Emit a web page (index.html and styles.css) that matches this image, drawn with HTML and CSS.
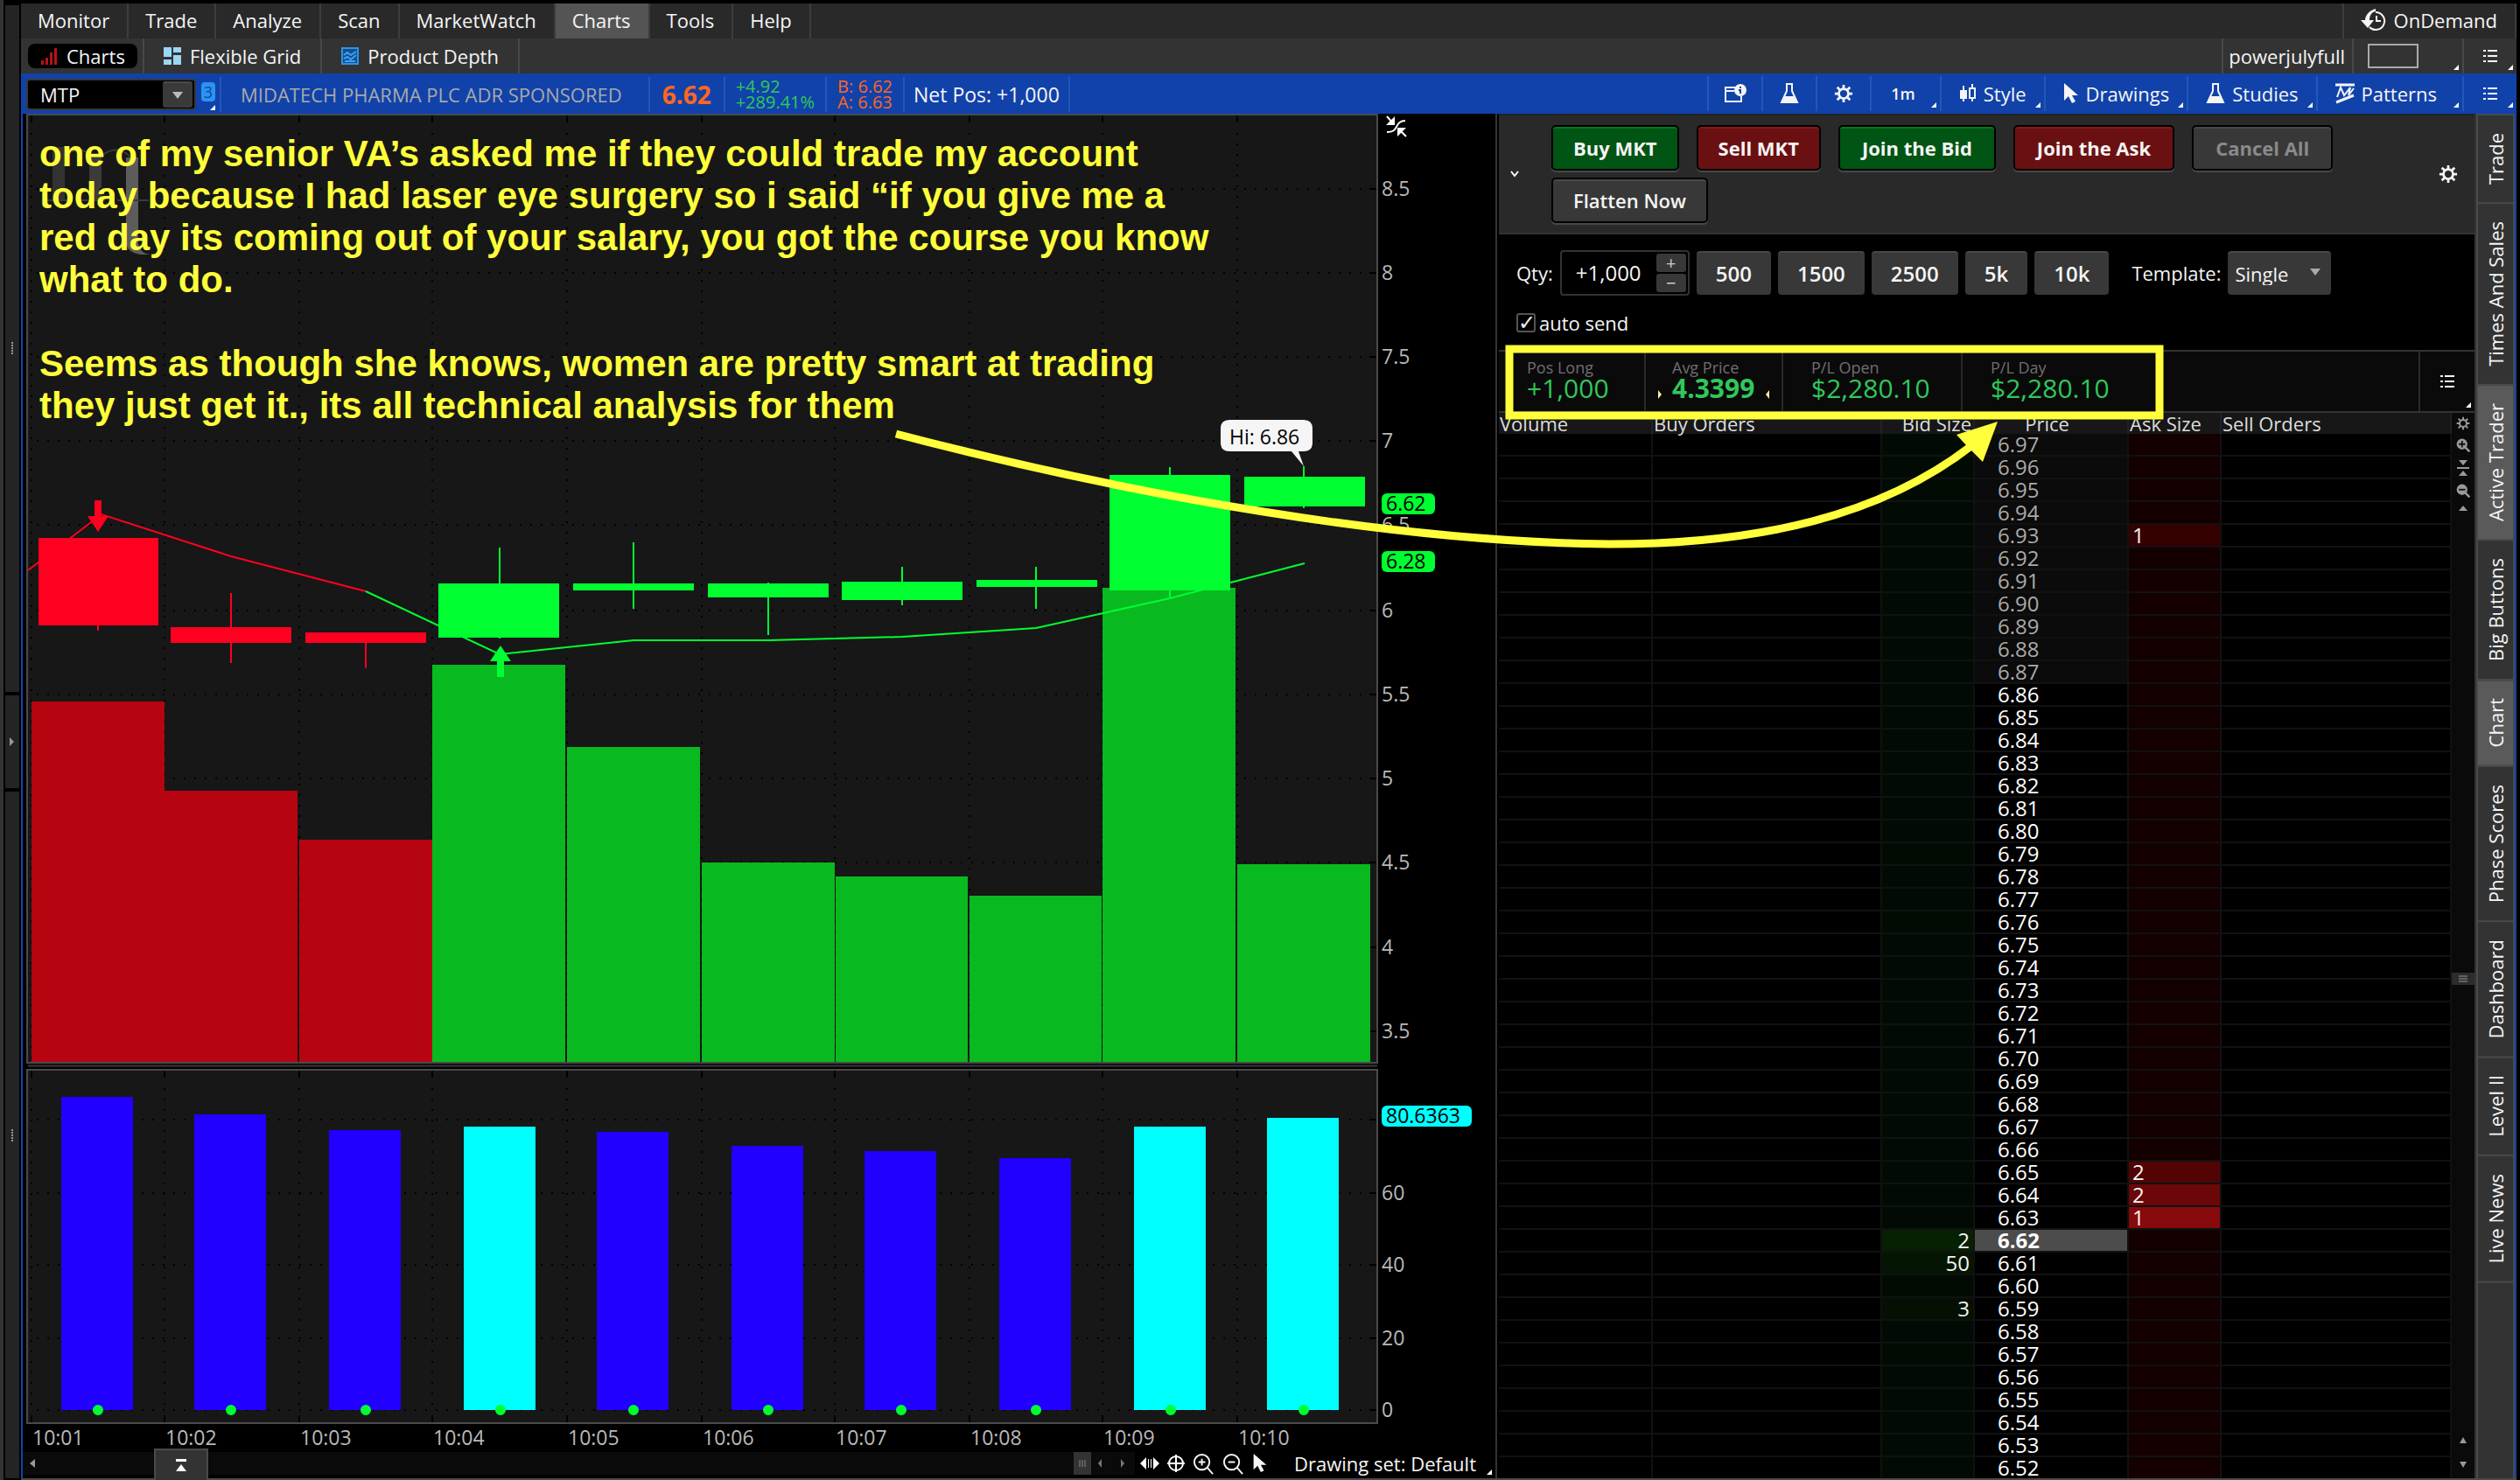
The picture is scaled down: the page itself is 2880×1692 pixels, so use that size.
FILE: index.html
```html
<!DOCTYPE html>
<html lang="en">
<head>
<meta charset="utf-8">
<title>Charts - MTP</title>
<link rel="stylesheet" href="styles.css">
</head>
<body>
<svg class="defs" aria-hidden="true">
  <symbol id="list" viewBox="0 0 16 16"><path d="M0 2h3M5 2h11M0 8h3M5 8h11M0 14h3M5 14h11" stroke="currentColor" stroke-width="2"/></symbol>
  <symbol id="gear" viewBox="0 0 24 24"><circle cx="12" cy="12" r="6" fill="none" stroke="currentColor" stroke-width="3"/><path d="M12 1v5M12 18v5M1 12h5M18 12h5M4 4l4 4M16 16l4 4M20 4l-4 4M8 16l-4 4" stroke="currentColor" stroke-width="3"/></symbol>
  <symbol id="flask" viewBox="0 0 22 26"><path d="M7 2h8M8 2v8L2 23h18L14 10V2" fill="none" stroke="currentColor" stroke-width="2"/><path d="M6 16h10l4 8H2z" fill="currentColor"/></symbol>
  <symbol id="cursor" viewBox="0 0 18 24"><path d="M1 0v20l5-5 4 8 4-2-4-7h7z" fill="currentColor"/></symbol>
  <symbol id="zin" viewBox="0 0 26 26"><circle cx="11" cy="11" r="9" fill="none" stroke="currentColor" stroke-width="2"/><path d="M17 17l7 8M7 11h8M11 7v8" stroke="currentColor" stroke-width="2"/></symbol>
  <symbol id="zout" viewBox="0 0 26 26"><circle cx="11" cy="11" r="9" fill="none" stroke="currentColor" stroke-width="2"/><path d="M17 17l7 8M7 11h8" stroke="currentColor" stroke-width="2"/></symbol>
</svg>

<aside class="gutter">
  <div class="gut g1"><span class="grip"></span></div>
  <div class="gut g2"><svg width="6" height="10"><path d="M0 0l5 5-5 5z" fill="#999"/></svg></div>
  <div class="gut g3"><span class="grip"></span></div>
</aside>

<div class="app">
  <div class="titlebar"></div>
  <nav class="menubar">
    <button>Monitor</button><button>Trade</button><button>Analyze</button><button>Scan</button><button>MarketWatch</button><button class="on">Charts</button><button>Tools</button><button>Help</button>
    <button class="ondemand"><svg width="30" height="26" viewBox="0 0 30 26"><path d="M17 4A10 10 0 1 1 10 21" fill="none" stroke="currentColor" stroke-width="2"/><path d="M18 8v6h5" fill="none" stroke="currentColor" stroke-width="2"/><path d="M17 0C9 2 5 8 5 13H0l8 9 7-9h-5c0-5 2-9 7-10z" fill="currentColor"/></svg>OnDemand</button>
  </nav>
  <nav class="subbar">
    <button class="pill-wrap"><span class="pill"><svg width="20" height="20"><path d="M1 20v-5h3v5zM6 20v-8h3v8zM11 20V6h3v14zM16 20V1h3v19z" fill="#b5121b"/></svg>Charts</span></button>
    <button class="grid-tab"><svg width="20" height="20"><path d="M0 0h9v11H0zM0 14h9v6H0zM11 0h9v6h-9zM11 9h9v11h-9z" fill="#9bd6f7"/></svg>Flexible Grid</button>
    <button class="depth-tab"><svg width="20" height="20"><rect x="1" y="1" width="18" height="18" fill="#174f86" stroke="#2a94f0" stroke-width="2"/><path d="M3 9l4-3 4 3 6-4M3 13l4-2 4 3 6-5M4 16h12" fill="none" stroke="#39a0ff" stroke-width="2"/></svg>Product Depth</button>
    <span class="spacer"></span>
    <button class="layout-name">powerjulyfull</button>
    <button class="layout-box tri" aria-label="Layout"><span></span></button>
    <button class="list-btn tri" aria-label="Menu"><svg width="16" height="16"><use href="#list"/></svg></button>
  </nav>
  <header class="quote">
    <div class="sym"><label><input type="text" value="MTP" aria-label="Symbol"></label><button aria-label="Open symbol list"><svg width="12" height="8"><path d="M0 0h12L6 8z" fill="#bbb"/></svg></button></div>
    <a class="link tri" href="#">3</a>
    <span class="name">MIDATECH PHARMA PLC ADR SPONSORED</span>
    <strong class="last">6.62</strong>
    <span class="pair up">+4.92<br>+289.41%</span>
    <span class="pair ba">B: 6.62<br>A: 6.63</span>
    <span class="net">Net Pos: +1,000</span>
    <span class="spacer"></span>
    <div class="tools">
      <button class="ico" aria-label="Info"><svg width="26" height="22" viewBox="0 0 26 22"><path d="M14 4H2v16h18v-6M2 8h10" fill="none" stroke="currentColor" stroke-width="2"/><circle cx="19" cy="7" r="7" fill="currentColor"/><path d="M19 3v2M17 7h2v4" stroke="#1142aa" stroke-width="2" fill="none"/></svg></button>
      <button class="ico" aria-label="Lab"><svg width="22" height="26"><use href="#flask"/></svg></button>
      <button class="ico" aria-label="Settings"><svg width="22" height="22"><use href="#gear"/></svg></button>
      <button class="tri tf">1m</button>
      <button class="tri"><svg width="20" height="24"><path d="M5 3v18M15 1v6M15 17v4" stroke="currentColor" stroke-width="2"/><path d="M1 8h8v10H1z" fill="currentColor"/><path d="M12 6h6v11h-6z" fill="none" stroke="currentColor" stroke-width="2"/></svg>Style</button>
      <button class="tri"><svg width="18" height="24"><use href="#cursor"/></svg>Drawings</button>
      <button class="tri"><svg width="22" height="26"><use href="#flask"/></svg>Studies</button>
      <button class="tri pat"><svg width="22" height="24"><path d="M0 2h22M1 22l20-8" stroke="currentColor" stroke-width="3"/><path d="M2 16L6 5l4 9 7-9-2 9 6-8" fill="none" stroke="currentColor" stroke-width="2"/></svg>Patterns</button>
      <button class="tri ico" aria-label="Menu"><svg width="16" height="16"><use href="#list"/></svg></button>
    </div>
  </header>

  <main class="work">
    <section class="chart">
      <svg class="plot" viewBox="26 130 1683 1526" preserveAspectRatio="xMinYMin meet">
        <rect x="31" y="131" width="1543" height="1084" fill="#171717" stroke="#4a4a4a" stroke-width="2"/>
        <rect x="32" y="1217" width="1542" height="3" fill="#292929"/>
        <rect x="31" y="1223" width="1543" height="404" fill="#171717" stroke="#4a4a4a" stroke-width="2"/>
        <g class="watermark"><path opacity=".6" d="M60 168h14v60H60z"/><path opacity=".8" d="M102 175h14v55h-14z"/><path fill="#5c5c5c" d="M144 180h14v98q2 12 14 13h-12q-16-3-16-15z"/><path d="M74 178q18-14 32 2M116 178q18-14 34 2M50 229h28M92 229h28M134 229h36" fill="none" stroke="#3a3a3a" stroke-width="2"/></g>
        <g class="grid">
          <path d="M36 152V1214M188 152V1214M342 152V1214M494 152V1214M648 152V1214M802 152V1214M954 152V1214M1108 152V1214M1260 152V1214M1414 152V1214"/>
          <path d="M42 216H1560M42 312H1560M42 408H1560M42 504H1560M42 600H1560M42 698H1560M42 794H1560M42 890H1560M42 986H1560M42 1083H1560M42 1179H1560"/>
          <path d="M36 1244V1612M188 1244V1612M342 1244V1612M494 1244V1612M648 1244V1612M802 1244V1612M954 1244V1612M1108 1244V1612M1260 1244V1612M1414 1244V1612"/>
          <path d="M42 1280H1560M42 1364H1560M42 1446H1560M42 1530H1560M42 1612H1560"/>
        </g>
        <path class="ticks" d="M36 132v8M188 132v8M342 132v8M494 132v8M648 132v8M802 132v8M954 132v8M1108 132v8M1260 132v8M1414 132v8M36 1224v8M188 1224v8M342 1224v8M494 1224v8M648 1224v8M802 1224v8M954 1224v8M1108 1224v8M1260 1224v8M1414 1224v8M36 1618v8M188 1618v8M342 1618v8M494 1618v8M648 1618v8M802 1618v8M954 1618v8M1108 1618v8M1260 1618v8M1414 1618v8M1565 216h8M1565 312h8M1565 408h8M1565 504h8M1565 600h8M1565 698h8M1565 794h8M1565 890h8M1565 986h8M1565 1083h8M1565 1179h8M1565 1280h8M1565 1364h8M1565 1446h8M1565 1530h8M1565 1612h8"/>
        <path fill="#b70411" d="M36 802h152v412H36zM188 904h152v310H188zM342 960h152v254H342z"/>
        <path fill="#08b920" d="M494 760h152v454H494zM648 854h152v360H648zM802 986h152v228H802zM955 1002h151v212H955zM1108 1024h151v190h-151zM1260 672h152v542h-152zM1414 988h152v226h-152z"/>
        <g fill="none" stroke-width="2">
          <path stroke="#ff0020" d="M32 652L116 588L264 636L418 676M264 678v80M418 735v29M112 715v6"/>
          <path stroke="#00ff30" d="M418 676L571 748L724 732H878L1031 728L1184 718L1337 684L1491 644M571 626v104M724 620v76M878 666v60M1031 648v44M1184 648v48M1337 534v149M1490 533v48"/>
        </g>
        <path fill="#ff0020" d="M44 615h137v100H44zM195 717h138v18H195zM349 723h138v12H349zM108 572h8v18h8l-12 18-12-18h8z"/>
        <path fill="#00ff30" d="M501 667h138v62H501zM655 667h138v8H655zM809 667h138v16H809zM962 665h138v21H962zM1116 663h138v8h-138zM1268 543h138v132h-138zM1422 545h138v34h-138zM568 774h8v-18h8l-12-18-12 18h8z"/>
        <path fill="#f5f5f5" d="M1405 480h85q10 0 10 10v16q0 10-10 10h-6l6 17-14-17h-71q-10 0-10-10v-16q0-10 10-10z"/>
        <text x="1405" y="508" fill="#000">Hi: 6.86</text>
        <path fill="#2100ff" d="M70 1254h82v358H70zM222 1274h82v338h-82zM376 1292h82v320h-82zM682 1294h82v318h-82zM836 1310h82v302h-82zM988 1316h82v296h-82zM1142 1324h82v288h-82z"/>
        <path fill="#0ff" d="M530 1288h82v324h-82zM1296 1288h82v324h-82zM1448 1278h82v334h-82z"/>
        <path class="dots" d="M112 1612h0M264 1612h0M418 1612h0M572 1612h0M724 1612h0M878 1612h0M1030 1612h0M1184 1612h0M1338 1612h0M1490 1612h0"/>
        <g class="axis">
          <text x="1579" y="224">8.5</text><text x="1579" y="320">8</text><text x="1579" y="416">7.5</text><text x="1579" y="512">7</text><text x="1579" y="608">6.5</text><text x="1579" y="706">6</text><text x="1579" y="802">5.5</text><text x="1579" y="898">5</text><text x="1579" y="994">4.5</text><text x="1579" y="1091">4</text><text x="1579" y="1187">3.5</text>
          <text x="1579" y="1372">60</text><text x="1579" y="1454">40</text><text x="1579" y="1538">20</text><text x="1579" y="1620">0</text>
          <text x="37" y="1652">10:01</text><text x="189" y="1652">10:02</text><text x="343" y="1652">10:03</text><text x="495" y="1652">10:04</text><text x="649" y="1652">10:05</text><text x="803" y="1652">10:06</text><text x="955" y="1652">10:07</text><text x="1109" y="1652">10:08</text><text x="1261" y="1652">10:09</text><text x="1415" y="1652">10:10</text>
        </g>
        <g class="flags">
          <rect x="1579" y="564" width="61" height="24" rx="6" fill="#00ff30"/><text x="1584" y="584">6.62</text>
          <rect x="1579" y="630" width="61" height="24" rx="6" fill="#00ff30"/><text x="1584" y="650">6.28</text>
          <rect x="1579" y="1264" width="103" height="24" rx="6" fill="#0ff"/><text x="1584" y="1284">80.6363</text>
        </g>
        <path d="M1594 133v10h-10zM1597 146h10l-10 10z" fill="#fff"/><path d="M1585 133l7 8M1600 149l7 7M1606 138c-6 0-8 3-10 7s-4 6-11 6" fill="none" stroke="#fff" stroke-width="2"/>
      </svg>
      <p class="note">one of my senior VA’s asked me if they could trade my account<br>today because I had laser eye surgery so i said “if you give me a<br>red day its coming out of your salary, you got the course you know<br>what to do.<br><br>Seems as though she knows, women are pretty smart at trading<br>they just get it., its all technical analysis for them</p>
      <footer class="foot tri">
        <div class="track"><svg width="6" height="10"><path d="M6 0L0 5l6 5z" fill="#999"/></svg><button class="expand" aria-label="Expand"><svg width="14" height="14"><path d="M1 0h12v3H1zM7 6l6 8H1z" fill="#fff"/></svg></button><span class="spacer"></span><span class="thumb"><svg width="8" height="8"><path d="M1 0v8M4 0v8M7 0v8" stroke="#888"/></svg></span><svg width="30" height="10"><path d="M4 0L0 5l4 5zM26 0l4 5-4 5z" fill="#777"/></svg></div>
        <div class="foot-tools">
          <svg width="22" height="14"><path d="M7 0v14L0 7zM15 0v14l7-7zM9 2h1v10H9zM12 2h1v10h-1z" fill="#fff"/></svg>
          <svg width="20" height="20"><circle cx="10" cy="10" r="8" fill="none" stroke="#fff" stroke-width="2"/><path d="M10 0v20M0 10h20" stroke="#fff" stroke-width="2"/></svg>
          <svg width="25" height="25"><use href="#zin"/></svg><svg width="25" height="25"><use href="#zout"/></svg><svg width="18" height="22"><use href="#cursor"/></svg>
        </div>
        <button class="dset">Drawing set: Default</button>
      </footer>
    </section>

    <section class="trader">
      <div class="actions">
        <button class="chev" aria-label="Collapse"><svg width="10" height="8"><path d="M1 1l4 5 4-5" fill="none" stroke="#fff" stroke-width="2"/></svg></button>
        <div class="btns"><button class="buy">Buy MKT</button><button class="sell">Sell MKT</button><button class="buy wide">Join the Bid</button><button class="sell wide">Join the Ask</button><button class="off" disabled>Cancel All</button><button class="flat">Flatten Now</button></div>
        <button class="cog" aria-label="Settings"><svg width="22" height="22"><use href="#gear"/></svg></button>
      </div>
      <form class="order">
        <div class="row">
          <label for="qty">Qty:</label>
          <div class="spin"><input id="qty" type="text" value="+1,000"><div><button type="button">+</button><button type="button">−</button></div></div>
          <button type="button">500</button><button type="button">1500</button><button type="button">2500</button><button type="button">5k</button><button type="button">10k</button>
          <label for="tpl" class="tpl">Template:</label>
          <div class="sel"><select id="tpl"><option>Single</option></select></div>
        </div>
        <label class="auto"><input type="checkbox" checked><span>auto send</span></label>
      </form>
      <div class="pos">
        <div><small>Pos Long</small><span>+1,000</span></div>
        <div class="avg"><small>Avg Price</small><b>4.3399</b></div>
        <div><small>P/L Open</small><span>$2,280.10</span></div>
        <div><small>P/L Day</small><span>$2,280.10</span></div>
        <button class="tri" aria-label="Menu"><svg width="16" height="16"><use href="#list"/></svg></button>
      </div>
      <div class="ladder">
        <div class="book"><table>
          <colgroup><col class="c1"><col class="c2"><col class="c3"><col class="c1"><col class="c3"><col></colgroup>
          <thead><tr><th>Volume<th>Buy Orders<th class="r">Bid Size<th class="c">Price<th>Ask Size<th>Sell Orders</thead>
          <tbody class="far">
          <tr><td><td><td><td>6.97<td><td>
          <tr><td><td><td><td>6.96<td><td>
          <tr><td><td><td><td>6.95<td><td>
          <tr><td><td><td><td>6.94<td><td>
          <tr><td><td><td><td>6.93<td class="a1">1<td>
          <tr><td><td><td><td>6.92<td><td>
          <tr><td><td><td><td>6.91<td><td>
          <tr><td><td><td><td>6.90<td><td>
          <tr><td><td><td><td>6.89<td><td>
          <tr><td><td><td><td>6.88<td><td>
          <tr><td><td><td><td>6.87<td><td>
          </tbody>
          <tbody>
          <tr><td><td><td><td>6.86<td><td>
          <tr><td><td><td><td>6.85<td><td>
          <tr><td><td><td><td>6.84<td><td>
          <tr><td><td><td><td>6.83<td><td>
          <tr><td><td><td><td>6.82<td><td>
          <tr><td><td><td><td>6.81<td><td>
          <tr><td><td><td><td>6.80<td><td>
          <tr><td><td><td><td>6.79<td><td>
          <tr><td><td><td><td>6.78<td><td>
          <tr><td><td><td><td>6.77<td><td>
          <tr><td><td><td><td>6.76<td><td>
          <tr><td><td><td><td>6.75<td><td>
          <tr><td><td><td><td>6.74<td><td>
          <tr><td><td><td><td>6.73<td><td>
          <tr><td><td><td><td>6.72<td><td>
          <tr><td><td><td><td>6.71<td><td>
          <tr><td><td><td><td>6.70<td><td>
          <tr><td><td><td><td>6.69<td><td>
          <tr><td><td><td><td>6.68<td><td>
          <tr><td><td><td><td>6.67<td><td>
          <tr><td><td><td><td>6.66<td><td>
          <tr><td><td><td><td>6.65<td class="a2">2<td>
          <tr><td><td><td><td>6.64<td class="a3">2<td>
          <tr><td><td><td><td>6.63<td class="a4">1<td>
          <tr class="cur"><td><td><td class="b3">2<td>6.62<td><td>
          <tr><td><td><td class="b2">50<td>6.61<td><td>
          <tr><td><td><td><td>6.60<td><td>
          <tr><td><td><td class="b1">3<td>6.59<td><td>
          <tr><td><td><td><td>6.58<td><td>
          <tr><td><td><td><td>6.57<td><td>
          <tr><td><td><td><td>6.56<td><td>
          <tr><td><td><td><td>6.55<td><td>
          <tr><td><td><td><td>6.54<td><td>
          <tr><td><td><td><td>6.53<td><td>
          <tr><td><td><td><td>6.52<td><td>
          </tbody>
        </table></div>
        <div class="scroll">
          <svg width="16" height="16"><use href="#gear"/></svg>
          <svg width="16" height="16" viewBox="0 0 26 26"><circle cx="11" cy="11" r="10" fill="#999"/><path d="M17 17l8 8" stroke="#999" stroke-width="4"/><path d="M5 11h12M11 5v12" stroke="#111" stroke-width="3"/></svg>
          <svg width="14" height="18"><path d="M2 0h10L7 6zM0 8h14v2H0zM7 12l5 6H2z" fill="#999"/></svg>
          <svg width="16" height="16" viewBox="0 0 26 26"><circle cx="11" cy="11" r="10" fill="#999"/><path d="M17 17l8 8" stroke="#999" stroke-width="4"/><path d="M5 11h12" stroke="#111" stroke-width="3"/></svg>
          <svg width="10" height="6"><path d="M5 0l5 6H0z" fill="#999"/></svg>
          <span class="vthumb"><svg width="10" height="8"><path d="M0 1h10M0 4h10M0 7h10" stroke="#999"/></svg></span>
          <svg class="up" width="10" height="8"><path d="M5 0l4 7H1z" fill="#999"/></svg>
          <svg width="10" height="8"><path d="M5 8l4-7H1z" fill="#999"/></svg>
        </div>
      </div>
    </section>

    <nav class="tabs">
      <button>Trade</button><button>Times And Sales</button><button class="on">Active Trader</button><button>Big Buttons</button><button class="on">Chart</button><button>Phase Scores</button><button>Dashboard</button><button>Level II</button><button>Live News</button>
    </nav>

    <svg class="markup" viewBox="26 130 2848 1560" preserveAspectRatio="xMinYMin meet" aria-hidden="true">
      <rect x="1725" y="399" width="743" height="76" fill="none" stroke="#ffff3c" stroke-width="9"/>
      <path d="M1024 496C1300 568 1600 620 1840 622C2010 622 2150 590 2254 509" fill="none" stroke="#ffff3c" stroke-width="9"/>
      <path d="M2283 482L2236 497L2248 510L2255 517L2266 528Z" fill="#ffff3c"/>
    </svg>
  </main>
</div>
</body>
</html>
```
FILE: styles.css
```css
* { box-sizing: border-box; }
html { background: #000; }
body {
  margin: 0;
  display: flex;
  min-height: 100vh;
  padding-right: 4px;
  background: #000;
  color: #f5f5f5;
  font: 22px/26px "Open Sans", "Noto Sans", sans-serif;
  overflow-x: hidden;
}
button, input, select { font: inherit; color: inherit; margin: 0; padding: 0; border: 0; background: none; border-radius: 0; }
svg { display: block; flex: none; }
.defs { position: absolute; width: 0; height: 0; }
.spacer { flex: 1; }

.gutter { width: 24px; flex: none; display: flex; flex-direction: column; gap: 4px; padding: 6px 2px 2px; border-left: 4px solid #333; background: #000; }
.gut { background: #242424; display: flex; align-items: center; justify-content: center; }
.g1 { flex: 784; }
.g2 { flex: 106; }
.g3 { flex: 784; }
.grip { width: 2px; height: 14px; background: repeating-linear-gradient(#999 0 2px, transparent 2px 3px); }

.app { flex: 1; min-width: 0; display: flex; flex-direction: column; border-bottom: 2px solid #4a4a4a; }
.titlebar { height: 4px; background: #000; }

.tri { position: relative; }
.tri::after { content: ""; position: absolute; right: 4px; bottom: 4px; border: solid transparent; border-width: 0 0 6px 6px; border-bottom-color: #fff; }

.menubar, .subbar { display: flex; height: 40px; background: #292929; }
.menubar button { padding: 0 20px 2px 19px; border-right: 2px solid #3d3d3d; }
.menubar .on { background: #545454; }
.menubar .ondemand { margin-left: auto; border-left: 2px solid #3d3d3d; display: flex; align-items: center; gap: 8px; }
.subbar { background: #333; }
.subbar button { display: flex; align-items: center; gap: 10px; border-right: 2px solid #484848; padding: 0 22px; }
.subbar .pill-wrap { padding: 0 6px 0 8px; }
.pill { display: flex; align-items: center; gap: 10px; height: 28px; padding: 0 14px; border-radius: 8px; background: #000; }
.subbar .layout-name { border-left: 2px solid #484848; padding: 0 8px 0 6px; }
.subbar .layout-box { padding: 0 50px 0 16px; }
.layout-box span { width: 58px; height: 28px; border: 2px solid #aaa; }
.subbar .list-btn { padding: 0 22px; border-right: 0; }

.quote { display: flex; height: 46px; background: #1142aa; }
.quote > * { display: flex; align-items: center; }
.sym { margin: 6px 6px 4px; width: 194px; background: #000; border: 2px solid #383838; border-radius: 4px; }
.sym label { flex: 1; }
.sym input { width: 100%; padding-left: 14px; }
.sym button { width: 34px; height: 30px; background: #3a3a3a; border-top: 2px solid #4b4b4b; display: flex; align-items: center; justify-content: center; border-radius: 3px; margin-right: 2px; }
.quote .link { align-self: center; width: 16px; height: 22px; border-radius: 4px; background: #2a94f0; color: #1142aa; text-decoration: none; font-size: 18px; line-height: 22px; justify-content: center; margin-bottom: 4px; }
.link.tri::after { right: 0; bottom: -10px; }
.name, .last, .pair, .net { border-left: 2px solid #2158b8; margin: 4px 0 2px; }
.name { margin-left: 5px; padding: 0 30px 0 22px; color: #a9a9a9; }
.last { padding: 0 14px; font-size: 28px; color: #ff6620; }
.quote .pair { display: block; padding: 2px 12px; font-size: 20px; line-height: 18px; }
.up { color: #30c85a; }
.ba { color: #ff6620; }
.net { padding: 0 10px; font-size: 23px; border-right: 2px solid #2158b8; }
.tools button { display: flex; align-items: center; justify-content: center; gap: 8px; height: 40px; padding: 0 20px; border-left: 2px solid #2158b8; }
.tools .ico { width: 62px; padding: 0; }
.tools .tf { padding: 0 28px 0 22px; font-size: 18px; font-weight: 600; }
.tools .pat { padding-right: 29px; }

.work { position: relative; flex: 1; display: grid; grid-template-columns: minmax(0, 1683fr) minmax(0, 1121fr) 44px; border: solid #1142aa; border-width: 0 2px; }
.chart { position: relative; display: flex; flex-direction: column; }
.plot { width: 100%; height: auto; overflow: visible; font-size: 23px; }
.watermark { fill: #454545; }
.grid path { stroke: #000; stroke-width: 2; stroke-dasharray: 2 10; }
.ticks { stroke: #000; stroke-width: 2; }
.dots { stroke: #00ff30; stroke-width: 12; stroke-linecap: round; }
.axis text { fill: #b9b9b9; }
.flags text { fill: #000; }
.note { position: absolute; left: 19px; top: 22px; margin: 0; color: #ffff3c; font: bold 42px/48px "Liberation Sans", Arial, sans-serif; white-space: nowrap; }
.foot { flex: 1; min-height: 34px; display: flex; align-items: center; padding-right: 22px; }
.track { flex: 1; display: flex; align-items: center; height: 26px; background: #0a0a0a; padding: 0 12px 0 8px; }
.expand { align-self: flex-end; margin: 0 0 -6px 136px; width: 62px; height: 36px; background: #333; border: 2px solid #4a4a4a; border-bottom: 0; display: flex; align-items: center; justify-content: center; }
.thumb { width: 20px; height: 26px; margin-right: 8px; background: #333; display: flex; align-items: center; justify-content: center; }
.foot-tools { display: flex; align-items: center; gap: 9px; padding: 0 30px 0 6px; }

.trader { display: flex; flex-direction: column; border-left: 2px solid #333; border-right: 2px solid #333; padding-left: 2px; min-height: 0; }
.actions { display: flex; align-items: center; height: 138px; background: #292929; border-top: 2px solid #222; border-bottom: 2px solid #333; }
.chev { width: 36px; display: flex; justify-content: center; }
.cog { width: 60px; display: flex; justify-content: center; }
.btns { flex: 1; display: flex; flex-wrap: wrap; gap: 8px 20px; padding-left: 24px; }
.btns button { height: 52px; padding: 0 23px; font-weight: 700; background: #383838; border: 2px solid #000; border-radius: 5px; box-shadow: inset 0 2px #484848, 0 2px #484848; }
.btns .flat { font-weight: 600; }
.btns .buy { background: #005414; box-shadow: inset 0 2px #007a1e, 0 2px #484848; }
.btns .sell { background: #6b1012; box-shadow: inset 0 2px #86181a, 0 2px #484848; }
.btns .wide { padding: 0 25px; }
.btns .off { color: #8a8a8a; padding: 0 25px; }
.order { height: 132px; padding: 18px 0 0 20px; }
.row { display: flex; align-items: center; gap: 8px; height: 52px; }
.row > button { height: 50px; padding: 0 22px; font-size: 24px; font-weight: 600; background: #383838; border-top: 2px solid #484848; border-radius: 4px; }
.spin { display: flex; width: 148px; height: 52px; border: 2px solid #333; border-radius: 4px; padding: 2px; }
.spin input { flex: 1; width: 0; padding-left: 14px; font-size: 24px; }
.spin div { display: flex; flex-direction: column; gap: 2px; width: 34px; }
.spin button { flex: 1; background: #383838; line-height: 18px; font-size: 20px; border-radius: 3px; color: #ccc; }
.tpl { margin-left: 18px; }
.sel { position: relative; }
.sel select { appearance: none; width: 118px; height: 50px; padding-left: 8px; background: #383838; border-top: 2px solid #484848; border-radius: 4px; }
.sel::after { content: ""; position: absolute; right: 12px; top: 20px; border: solid transparent; border-width: 8px 6px 0; border-top-color: #aaa; }
.auto { display: flex; align-items: center; gap: 4px; margin-top: 18px; }
.auto input { appearance: none; width: 22px; height: 22px; border: 2px solid #555; border-radius: 3px; display: grid; place-items: center; }
.auto input::before { content: "✓"; font: 24px/18px "DejaVu Sans", sans-serif; color: #eee; }
.pos { display: grid; grid-template-columns: 168px 157px 205px 1fr 62px; height: 72px; background: #0a0a0a; border: solid #333; border-width: 2px 0; }
.pos > div { padding: 8px 0 0 32px; border-right: 2px solid #292929; }
.pos small { display: block; font-size: 18px; line-height: 20px; color: #6f6f6f; }
.pos span, .pos b { display: block; font-size: 30px; line-height: 28px; color: #30c85a; }
.avg { position: relative; }
.pos .avg { padding-left: 30px; }
.avg::before, .avg::after { content: ""; position: absolute; top: 44px; border: solid transparent; border-width: 5px 0 5px 4px; border-left-color: #ffe9a0; left: 14px; }
.avg::after { left: auto; right: 14px; border-width: 5px 4px 5px 0; border-right-color: #ffe9a0; }
.pos button { display: flex; align-items: center; justify-content: center; }

.ladder { flex: 1 1 0; min-height: 0; height: 0; display: flex; overflow: hidden; }
.book { flex: 1; }
.book table { width: 100%; table-layout: fixed; border-collapse: separate; border-spacing: 0; }
.c1 { width: 176px; }
.c2 { width: 262px; }
.c3 { width: 106px; }
.book th { height: 24px; line-height: 24px; padding: 0 2px 0 1px; text-align: left; font-weight: 400; background: #171717; color: #ddd; border-right: 2px solid #222; white-space: nowrap; }
.book .r { text-align: right; }
.book .c { padding-right: 10px; text-align: center; }
.book td { height: 26px; line-height: 24px; padding: 0 4px; font-size: 24px; border-bottom: 2px solid #111; border-right: 2px solid #111; }
.book td:nth-child(3) { background: #010b03; text-align: right; }
.book td:nth-child(4) { padding-left: 26px; color: #fff; }
.book td:nth-child(5) { background: #140000; }
.book .far td:nth-child(4) { background: #0b0b0b; color: #aaa; }
.book .cur td:nth-child(4) { background: #4c4c4c; font-weight: 700; }
.book td.a1:nth-child(5) { background: #350000; }
.book td.a2:nth-child(5) { background: #520405; }
.book td.a3:nth-child(5) { background: #6b0708; }
.book td.a4:nth-child(5) { background: #870a0c; }
.book td.b1:nth-child(3) { background: #051003; }
.book td.b2:nth-child(3) { background: #041603; }
.book td.b3:nth-child(3) { background: #062002; }
.scroll { width: 26px; background: #0a0a0a; color: #999; display: flex; flex-direction: column; align-items: center; gap: 9px; padding: 4px 0 12px; }
.vthumb { margin: 519px 0 auto; width: 26px; height: 14px; background: #2c2c2c; display: flex; align-items: center; justify-content: center; }
.scroll .up { margin-bottom: 10px; }

.tabs { background: #333; border: solid #4a4a4a; border-width: 2px 2px 0; display: flex; flex-direction: column; }
.tabs button { writing-mode: vertical-rl; transform: rotate(180deg); padding: 20px 0; width: 100%; border-top: 2px solid #4a4a4a; text-align: center; }
.tabs .on { background: #5a5a5a; }

.markup { position: absolute; left: 0; top: 0; width: 100%; height: auto; pointer-events: none; }
```
